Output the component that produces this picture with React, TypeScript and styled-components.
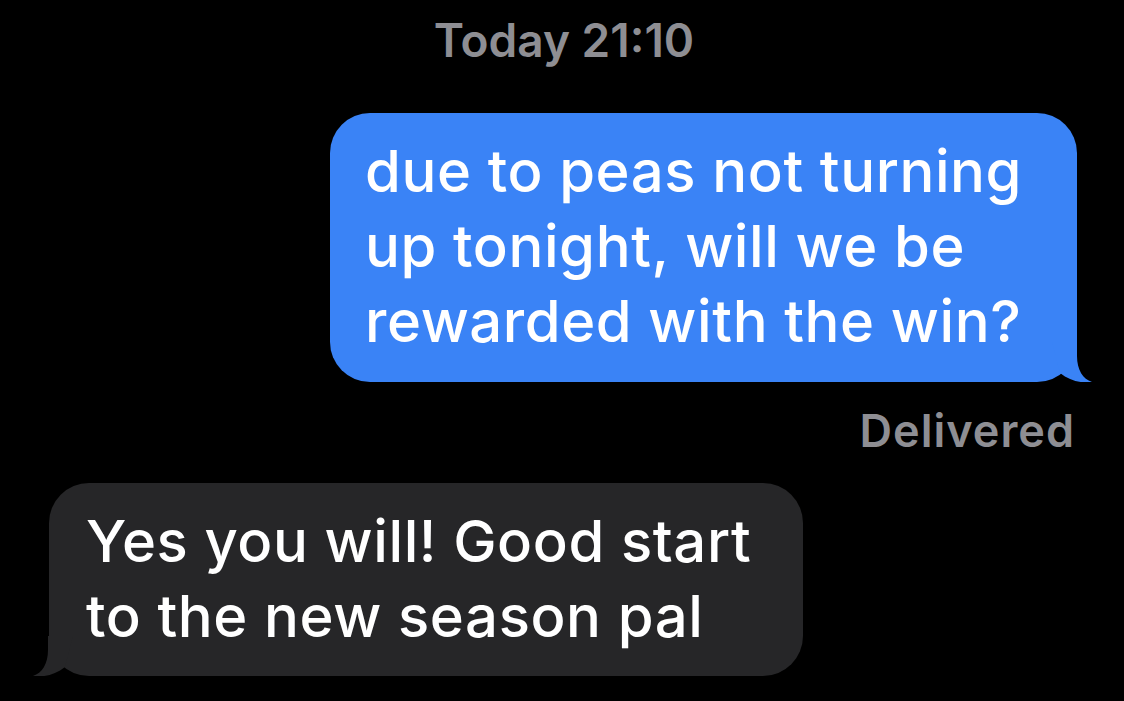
import React from "react";
import styled, { createGlobalStyle } from "styled-components";

const Global = createGlobalStyle`
  html, body {
    margin: 0;
    padding: 0;
    background: #000;
  }
  body {
    font-family: Inter, "Liberation Sans", Arial, sans-serif;
    -webkit-font-smoothing: antialiased;
  }
`;

type Side = "out" | "in";

const palette: Record<Side, string> = {
  out: "#3a83f6",
  in: "#262628",
};

const Thread = styled.main`
  width: 1124px;
  height: 701px;
  overflow: hidden;
  box-sizing: border-box;
  background: #000;
  display: flex;
  flex-direction: column;
  padding: 14px 47px 0 49px;
`;

const Stamp = styled.div`
  align-self: center;
  color: #8e8e93;
  font-size: 46px;
  font-weight: 600;
  line-height: 52px;
  margin-left: 2px;
`;

const Row = styled.div<{ $side: Side; $gap: number }>`
  display: flex;
  justify-content: ${(p) => (p.$side === "out" ? "flex-end" : "flex-start")};
  margin-top: ${(p) => p.$gap}px;
`;

const Bubble = styled.div<{ $side: Side; $w: number }>`
  position: relative;
  box-sizing: border-box;
  width: ${(p) => p.$w}px;
  background: ${(p) => palette[p.$side]};
  color: #fff;
  font-size: 58px;
  font-weight: 500;
  letter-spacing: 0.6px;
  line-height: 75px;
  border-radius: 40px;
  padding: ${(p) => (p.$side === "out" ? "21px 10px 23px 35px" : "21px 10px 22px 37px")};
  white-space: nowrap;
`;

const Tail = styled.svg<{ $side: Side }>`
  position: absolute;
  bottom: 0;
  width: 40px;
  height: 40px;
  ${(p) =>
    p.$side === "out"
      ? "right: -15px;"
      : "left: -16px; transform: scaleX(-1);"}
`;

const Receipt = styled.div`
  align-self: flex-end;
  margin-top: 24px;
  margin-right: 2px;
  color: #8e8e93;
  font-size: 45px;
  font-weight: 600;
  letter-spacing: 1px;
  line-height: 50px;
`;

function Message({
  side,
  width,
  lines,
}: {
  side: Side;
  width: number;
  lines: string[];
}) {
  return (
    <Bubble $side={side} $w={width}>
      {lines.map((l, i) => (
        <React.Fragment key={i}>
          {l}
          {i < lines.length - 1 && <br />}
        </React.Fragment>
      ))}
      <Tail $side={side} viewBox="0 0 40 40" aria-hidden>
        <path
          d="M25 0 L25 14 C25 28 31 37 40 40 C30 41.5 18 39 8 31 L0 0 Z"
          fill={palette[side]}
        />
      </Tail>
    </Bubble>
  );
}

export default function App() {
  return (
    <>
      <Global />
      <Thread>
        <Stamp>Today 21:10</Stamp>
        <Row $side="out" $gap={47}>
          <Message
            side="out"
            width={747}
            lines={[
              "due to peas not turning",
              "up tonight, will we be",
              "rewarded with the win?",
            ]}
          />
        </Row>
        <Receipt>Delivered</Receipt>
        <Row $side="in" $gap={27}>
          <Message
            side="in"
            width={754}
            lines={["Yes you will! Good start", "to the new season pal"]}
          />
        </Row>
      </Thread>
    </>
  );
}
